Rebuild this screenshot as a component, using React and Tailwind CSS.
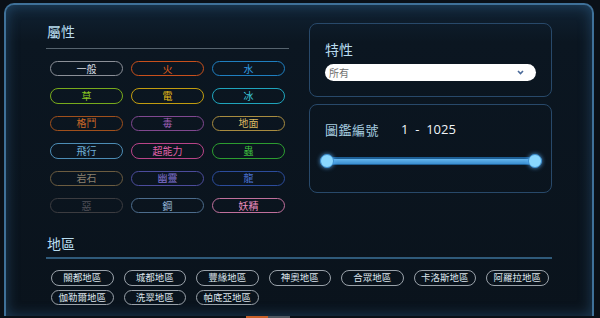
import React from "react";

const types = [
  ["一般", "#8c9098", "#d8dce2"],
  ["火", "#c8501c", "#e0601c"],
  ["水", "#1f7fc0", "#2f9ae0"],
  ["草", "#78aa1c", "#8cc820"],
  ["電", "#c09c10", "#e0b818"],
  ["冰", "#1fa4bc", "#3cc8dc"],
  ["格鬥", "#a0501c", "#c86828"],
  ["毒", "#804890", "#a060b8"],
  ["地面", "#a88c40", "#d8b860"],
  ["飛行", "#4c8cb4", "#70b0d8"],
  ["超能力", "#b84488", "#e060a8"],
  ["蟲", "#2c9c30", "#40c040"],
  ["岩石", "#6c5c40", "#8c8070"],
  ["幽靈", "#4c4c9c", "#8070d0"],
  ["龍", "#2c4c9c", "#4870d0"],
  ["惡", "#3c3c40", "#505058"],
  ["鋼", "#4c6c8c", "#90b0d0"],
  ["妖精", "#c0709c", "#f090c0"],
];

const regions = [
  "關都地區",
  "城都地區",
  "豐緣地區",
  "神奧地區",
  "合眾地區",
  "卡洛斯地區",
  "阿羅拉地區",
  "伽勒爾地區",
  "洗翠地區",
  "帕底亞地區",
];

const font = { fontFamily: '"Noto Sans CJK TC", "Noto Sans", sans-serif' };

export default function App() {
  return (
    <div className="w-[600px] h-[318px] overflow-hidden bg-[#0a1017] flex flex-col" style={font}>
      <div className="mt-[3px] ml-[4px] w-[590px] h-[313px] shrink-0 rounded-t-[10px] border-2 border-b-0 border-[#3f7199] bg-[linear-gradient(180deg,#102233_0%,#0b1621_12%,#0a131c_100%)] shadow-[inset_0_0_14px_rgba(70,140,200,0.35)] px-[40px] pt-[16px]">
        <div className="grid grid-cols-2 gap-x-[20px]">
          <div className="flex flex-col">
            <div className="h-[20px] text-[14px] leading-[20px] text-[#b8dcef] pl-[1px]">屬性</div>
            <div className="mt-[7px] h-px bg-[#56636e]" />
            <div className="mt-[12px] grid grid-cols-3 gap-x-[8px] gap-y-[12px] px-[4px]">
              {types.map(([name, border, color]) => (
                <div
                  key={name}
                  className="h-[15.4px] rounded-full border flex items-center justify-center text-[10px] leading-none"
                  style={{ borderColor: border, color }}
                >
                  {name}
                </div>
              ))}
            </div>
          </div>
          <div className="flex flex-col gap-[7px] pt-[2px]">
            <div className="h-[74px] rounded-[8px] border border-[#28496a] px-[15px] pt-[15px]">
              <div className="text-[14px] leading-[20px] text-[#b8dcef]">特性</div>
              <div className="mt-[5px] h-[17px] rounded-full bg-white flex items-center justify-between pl-[4px] pr-[12px]">
                <span className="text-[10px] leading-none text-[#707070]">所有</span>
                <svg width="7" height="5" viewBox="0 0 7 5">
                  <path d="M1 1 L3.5 3.5 L6 1" stroke="#4a6a9a" strokeWidth="1.6" fill="none" />
                </svg>
              </div>
            </div>
            <div className="h-[89px] rounded-[8px] border border-[#28496a] px-[10px] pt-[15px]">
              <div className="flex items-center h-[20px] pl-[5px]">
                <span className="text-[13px] text-[#a8cfe0] tracking-[0.5px]">圖鑑編號</span>
                <span className="ml-[22px] text-[13px] text-[#f0f4f8] whitespace-pre" style={{ fontFamily: '"Open Sans", "Noto Sans", sans-serif' }}>
                  1  -  1025
                </span>
              </div>
              <div className="relative mt-[14px] h-[14px] mx-[0px] flex items-center">
                <div className="absolute left-[7px] right-[5px] h-[8px] rounded-full bg-[#1d5e94] flex items-center px-[1px]">
                  <div className="w-full h-[5px] rounded-full bg-[linear-gradient(180deg,#64b6ee,#3a8ed0)]" />
                </div>
                <div className="absolute left-[0px] w-[14px] h-[14px] rounded-full bg-[#8ad8ff] border border-[#3d8fd0] shadow-[0_0_4px_rgba(90,180,255,0.8)]" />
                <div className="absolute right-[-1px] w-[14px] h-[14px] rounded-full bg-[#8ad8ff] border border-[#3d8fd0] shadow-[0_0_4px_rgba(90,180,255,0.8)]" />
              </div>
            </div>
          </div>
        </div>
        <div className="mt-[20px] text-[14px] leading-[20px] text-[#b8dcef] pl-[1px]">地區</div>
        <div className="mt-[4px] h-[2px] bg-[#2f5a7a]" />
        <div className="mt-[11px] flex flex-wrap gap-x-[10px] gap-y-[4px] pl-[5px] w-[506px]">
          {regions.map((r) => (
            <div
              key={r}
              className="w-[62.5px] h-[15.5px] rounded-full border border-[#9aa2aa] flex items-center justify-center text-[9.5px] leading-none text-[#dce4ec]"
            >
              {r}
            </div>
          ))}
        </div>
      </div>
      <div className="h-[2px] flex">
        <div className="ml-[246px] w-[22px] bg-[#c86028]" />
        <div className="w-[22px] bg-[#505860]" />
      </div>
    </div>
  );
}
